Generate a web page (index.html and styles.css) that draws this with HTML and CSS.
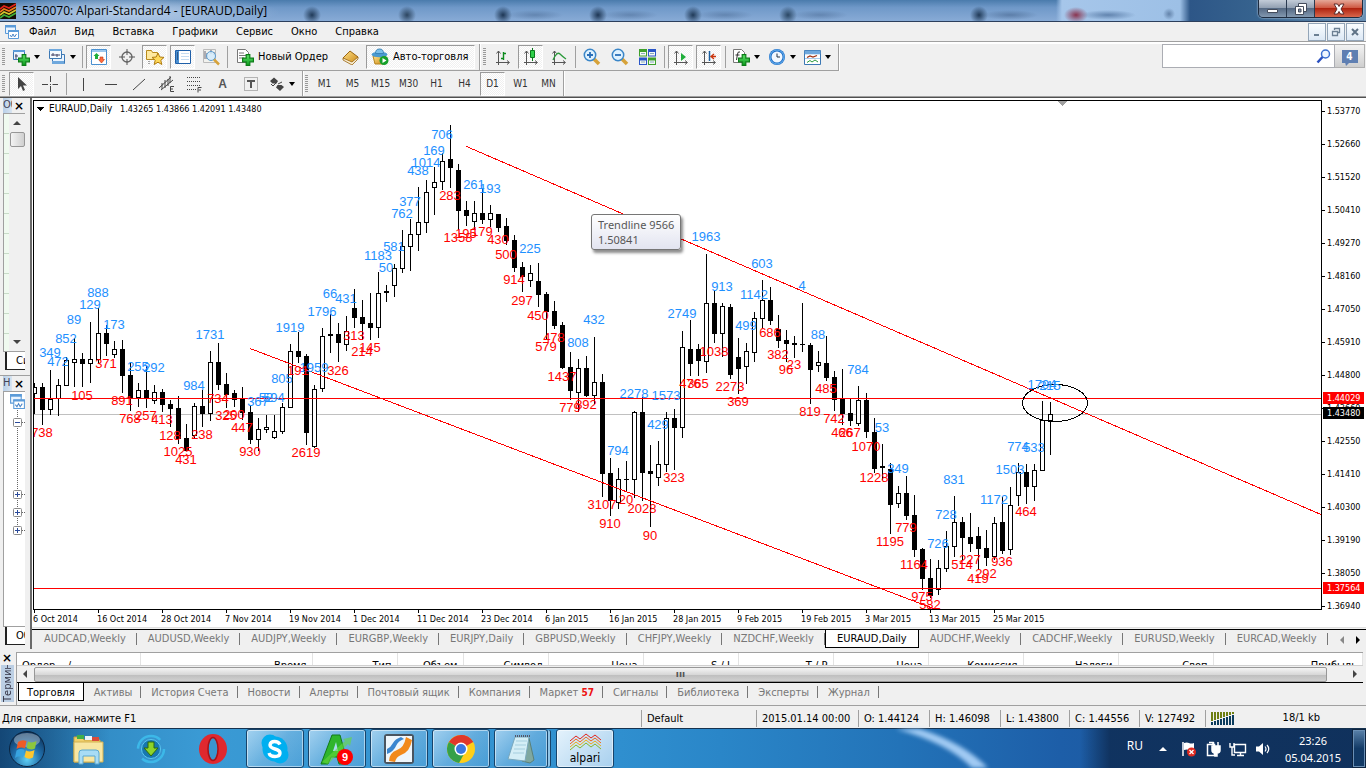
FILE: index.html
```html
<!DOCTYPE html>
<html lang="ru">
<head>
<meta charset="utf-8">
<title>5350070: Alpari-Standard4 - [EURAUD,Daily]</title>
<link rel="stylesheet" href="styles.css">
</head>
<body>
<svg class="defs" aria-hidden="true">
  <defs>
    <linearGradient id="gPlus" x1="0" y1="0" x2="0" y2="1"><stop offset="0" stop-color="#5fe36a"/><stop offset="1" stop-color="#0b9a1c"/></linearGradient>
    <linearGradient id="gGold" x1="0" y1="0" x2="1" y2="1"><stop offset="0" stop-color="#ffe28a"/><stop offset="1" stop-color="#c98512"/></linearGradient>
    <radialGradient id="gOrb" cx=".5" cy=".8" r=".8"><stop offset="0" stop-color="#5fd0f5"/><stop offset=".5" stop-color="#1f6ca8"/><stop offset="1" stop-color="#0d2f55"/></radialGradient>
    <symbol id="plus" viewBox="0 0 10 10"><path d="M3.500.5h3v3h3v3h-3v3h-3v-3h-3v-3h3z" fill="url(#gPlus)" stroke="#0a7d16"/></symbol>
    <symbol id="axes" viewBox="0 0 18 18"><path d="M4.500 3v14M2 14.500h13M2.500 5.500l2-2.500 2 2.500M13 12.500l2.500 2-2.500 2" fill="none" stroke="#555"/></symbol>
    <symbol id="charts" viewBox="0 0 16 16"><path d="M1.500 1.500h10v8h-10z" fill="#eaf4ff" stroke="#5b9bd8"/><path d="M1 1h11v2.500H1z" fill="#5b9bd8"/><path d="M4.500 6.500h10v8h-10z" fill="#fff" stroke="#5b9bd8"/><path d="M4 6h11v2H4z" fill="#5b9bd8"/><path d="M6 11l1.500 2 1.500-3 1.500 3 2-3" fill="none" stroke="#4a86c8"/></symbol>
  </defs>
</svg>

<header class="titlebar">
  <svg class="logo" viewBox="0 0 16 16"><rect width="16" height="16" fill="#150c05"/><g fill="none" stroke-width="1.600"><path d="M0 6l4-3 5 2 7-4" stroke="#e2231a"/><path d="M0 9l4-3 5 2 7-4" stroke="#f07a1a"/><path d="M0 12l4-3 5 2 7-4" stroke="#d5c52a"/><path d="M0 15l4-3 5 2 7-4" stroke="#3fae38"/></g></svg>
  <h1 class="title">5350070: Alpari-Standard4 - [EURAUD,Daily]</h1>
  <div class="winctl">
    <button class="wc" aria-label="Свернуть"><svg width="14" height="12"><path d="M1.500 6.500h10v3h-10z" fill="#fff" stroke="#444c5c"/></svg></button>
    <button class="wc" aria-label="Восстановить"><svg width="14" height="12"><path d="M4.500.5h8v8h-8z" fill="#fff" stroke="#444c5c"/><path d="M1.500 3.500h8v8h-8z" fill="#fff" stroke="#444c5c"/><path d="M4.500 6h2.500v3H4.500z" fill="#8292ab" stroke="#444c5c"/></svg></button>
    <button class="wc wc-close" aria-label="Закрыть"><svg width="14" height="12"><path d="M2 1h3.500L7 3.500 8.500 1H12L9 6l3 5H8.500L7 8.500 5.500 11H2l3-5z" fill="#fff" stroke="#5a2a2a"/></svg></button>
  </div>
</header>

<nav class="menubar">
  <svg class="mdi-icon" width="16" height="16"><use href="#charts"/></svg>
  <button>Файл</button><button>Вид</button><button>Вставка</button><button>Графики</button><button>Сервис</button><button>Окно</button><button>Справка</button>
  <div class="mdictl">
    <button aria-label="Свернуть окно"><svg width="10" height="10"><path d="M2 7h5v2H2z" fill="#6b7f93"/></svg></button>
    <button aria-label="Восстановить окно"><svg width="10" height="10"><path d="M3.500 3V1.500h5v4H7M1.500 4.500h5v4h-5z" fill="none" stroke="#6b7f93" stroke-width="1.300"/></svg></button>
    <button aria-label="Закрыть окно"><svg width="10" height="10"><path d="M2 2l6 6M8 2L2 8" stroke="#5f7387" stroke-width="2"/></svg></button>
  </div>
</nav>

<div class="tools">
  <div class="bars">
    <div class="bar">
      <div class="band">
        <i class="grip"></i>
        <button class="tb drop" aria-label="Новый график"><svg width="18" height="18"><path d="M1.500 2.500h11v9h-11z" fill="#eaf4ff" stroke="#3c78b4"/><path d="M1 2h12v2H1z" fill="#5b9bd8"/><path d="M4 6v5M3 8h3" stroke="#446"/><use href="#plus" x="6" y="6" width="12" height="12"/></svg></button>
        <button class="tb drop" aria-label="Профили"><svg width="18" height="18"><path d="M4.500 6.500h12v9h-12z" fill="#eaf4ff" stroke="#3c78b4"/><path d="M1.500 1.500h12v9h-12z" fill="#f4faff" stroke="#3c78b4"/><path d="M1 1h13v2H1zM4 13h12v3H4z" fill="#6fa8dd"/><path d="M3 7h9M5 5v3M9 6v3" stroke="#446"/></svg></button>
        <i class="sep"></i>
        <button class="tb on" aria-label="Обзор рынка"><svg width="16" height="16"><path d="M.5.500h15v15H.5z" fill="#fff" stroke="#4a90d0"/><path d="M1 1h14v2H1z" fill="#9cc8ee"/><path d="M5.500 4l3 3H7v3H4V7H2.500z" fill="#1fae3a"/><path d="M10.500 14l-3-3.500H9V8h3v2.500h1.500z" fill="#ff6a3c" stroke="#b83a18" stroke-width=".6"/></svg></button>
        <button class="tb" aria-label="Окно данных"><svg width="16" height="16"><circle cx="8" cy="8" r="5" fill="none" stroke="#666" stroke-width="1.300"/><path d="M8 0v6M8 10v6M0 8h6M10 8h6" stroke="#555"/></svg></button>
        <button class="tb on" aria-label="Навигатор"><svg width="20" height="18"><path d="M1.500 2.500h5l1 2h5v7h-11z" fill="#ffe9a0" stroke="#b98a1c"/><path d="M4 13v4" stroke="#555" stroke-dasharray="1 1"/><path d="M13 5l1.800 4 4.200.4-3.200 2.900 1 4.200-3.800-2.300-3.800 2.300 1-4.200L7 9.400l4.200-.4z" fill="#ffd95a" stroke="#b07c10"/></svg></button>
        <button class="tb on" aria-label="Терминал"><svg width="16" height="14"><path d="M.5.500h15v13H.5z" fill="#fff" stroke="#1f5fa8"/><path d="M1 1h3v12H1z" fill="#4a8fd0"/><path d="M2 3h1M2 5h1M2 7h1M2 9h1" stroke="#102040"/><path d="M6 3.500h8M6 6.500h8M6 9.500h8" stroke="#c5dcf2"/></svg></button>
        <button class="tb" aria-label="Тестер стратегий"><svg width="18" height="18"><path d="M1.500 1.500h12v13h-12z" fill="#f2f2ee" stroke="#bbb"/><path d="M3 3v8M5 5v6M9 2v4M12 4v3" stroke="#667"/><circle cx="9" cy="8" r="4.500" fill="#d5ecfb" fill-opacity=".85" stroke="#5c9cd0"/><path d="M12 11.500l5 5" stroke="#d6a23a" stroke-width="2.500"/></svg></button>
        <i class="sep"></i>
        <button class="tb txt"><svg width="18" height="18"><path d="M1.500 1.500h8l3 3v10h-11z" fill="#fff" stroke="#777"/><path d="M3 5h5M3 7.500h7M3 10h5" stroke="#777"/><use href="#plus" x="6" y="6" width="12" height="12"/></svg>Новый Ордер</button>
        <button class="tb" aria-label="MetaEditor"><svg width="18" height="16"><path d="M1 9l7-7 8 6-6 7z" fill="url(#gGold)" stroke="#9a6410"/><path d="M1 9v2l9 5 6-6V8l-6 5z" fill="#f7ecd0" stroke="#9a6410" stroke-width=".8"/></svg></button>
        <button class="tb txt on"><svg width="18" height="18"><path d="M2 8l2 8h8l3-8z" fill="url(#gGold)" stroke="#b5831c"/><ellipse cx="8.500" cy="6.500" rx="8" ry="2.800" fill="#4a9ad0"/><path d="M4.500 5.500q0-4.500 4-4.500t4 4.500z" fill="#7cc0ea" stroke="#3a84b8"/><circle cx="13" cy="12.500" r="4.500" fill="#16a02a"/><path d="M11.500 10v5l4-2.500z" fill="#fff"/></svg>Авто-торговля</button>
      </div>
      <div class="band">
        <i class="grip"></i>
        <button class="tb" aria-label="Бары"><svg width="18" height="18"><use href="#axes"/><path d="M9.500 4v8M7 10.500h2.500M9.500 5.500H12" stroke="#0a8a1c" stroke-width="1.400" fill="none"/></svg></button>
        <button class="tb on" aria-label="Свечи"><svg width="18" height="18"><use href="#axes"/><path d="M10.500 0v13" stroke="#0a7a1c"/><path d="M8.500 2.500h4v7h-4z" fill="#2fd04a" stroke="#0a7a1c"/></svg></button>
        <button class="tb" aria-label="Линия"><svg width="18" height="18"><use href="#axes"/><path d="M3 12q4-9 7-6t6 5" stroke="#2a9a3a" stroke-width="1.300" fill="none"/></svg></button>
        <i class="sep"></i>
        <button class="tb" aria-label="Увеличить"><svg width="18" height="18"><path d="M11 11l5 5" stroke="#d6a23a" stroke-width="3.500"/><circle cx="7" cy="7" r="5.700" fill="#dff2ff" stroke="#3a86c8" stroke-width="1.500"/><path d="M4 7h6M7 4v6" stroke="#2a6fb8" stroke-width="1.800"/></svg></button>
        <button class="tb" aria-label="Уменьшить"><svg width="18" height="18"><path d="M11 11l5 5" stroke="#d6a23a" stroke-width="3.500"/><circle cx="7" cy="7" r="5.700" fill="#dff2ff" stroke="#3a86c8" stroke-width="1.500"/><path d="M4 7h6" stroke="#2a6fb8" stroke-width="1.800"/></svg></button>
        <button class="tb" aria-label="Окна плиткой"><svg width="17" height="16"><path d="M0 0h8v7.500H0zM9 8.500h8V16H9z" fill="#3fa02c"/><path d="M9 0h8v7.500H9zM0 8.500h8V16H0z" fill="#2a56c8"/><path d="M1 3h6v3.500H1zM10 3h6v3.500h-6zM1 11.500h6V15H1zM10 11.500h6V15h-6z" fill="#f4f8f4"/><path d="M2 4.500h4M11 4.500h4M2 13h4M11 13h4" stroke="#8ab"/></svg></button>
        <i class="sep"></i>
        <button class="tb on" aria-label="Автопрокрутка"><svg width="18" height="18"><use href="#axes"/><path d="M9 5l5 4-5 4z" fill="#1fae3a"/></svg></button>
        <button class="tb on" aria-label="Сдвиг графика"><svg width="18" height="18"><use href="#axes"/><path d="M9.500 3v10" stroke="#1a5fa0" stroke-width="1.500"/><path d="M11 8.500h5M14 6l-3 2.500 3 2.500" stroke="#c8330c" stroke-width="1.300" fill="none"/></svg></button>
        <i class="sep"></i>
        <button class="tb drop" aria-label="Индикаторы"><svg width="18" height="18"><path d="M1.500 1.500h8l3 3v10h-11z" fill="#fff" stroke="#777"/><path d="M8 4Q6 3 5.500 6l-1 6M3.500 7h4" stroke="#333" fill="none"/><use href="#plus" x="6" y="6" width="12" height="12"/></svg></button>
        <button class="tb drop" aria-label="Периоды"><svg width="18" height="18"><circle cx="9" cy="9" r="8" fill="#1f6fc8"/><circle cx="9" cy="9" r="7" fill="none" stroke="#6ab4f0"/><circle cx="9" cy="9" r="5.500" fill="#f2f8ff"/><path d="M9 5.500V9h3" stroke="#234" fill="none"/></svg></button>
        <button class="tb drop" aria-label="Шаблоны"><svg width="17" height="15"><path d="M.5.500h16v14H.5z" fill="#fff" stroke="#3c78b4"/><path d="M1 1h15v3H1zM1 8.500h15" fill="#6fa8dd" stroke="#6fa8dd" stroke-width=".6"/><path d="M3 7.500l3-1.500 3 1 4-1.500" stroke="#a03010" fill="none" stroke-width="1.300"/><path d="M3 12.500l3-2 2 1.500 3-2 3 2" stroke="#2a9a3a" fill="none"/></svg></button>
      </div>
    </div>
    <div class="bar">
      <div class="band">
        <i class="grip"></i>
        <button class="tb on" aria-label="Курсор"><svg width="12" height="16"><path d="M2 1v12l3-3 2 5 2-1-2-4.500h4z" fill="#444"/></svg></button>
        <button class="tb" aria-label="Перекрестие"><svg width="16" height="16"><path d="M8.500 0v6M8.500 10v6M0 8.500h6M10.500 8.500h6M8 8.500h1" stroke="#444"/></svg></button>
        <i class="sep"></i>
        <button class="tb" aria-label="Вертикальная линия"><svg width="16" height="16"><path d="M8.500 2v13" stroke="#444"/></svg></button>
        <button class="tb" aria-label="Горизонтальная линия"><svg width="16" height="16"><path d="M2 8.500h12" stroke="#444"/></svg></button>
        <button class="tb" aria-label="Трендовая линия"><svg width="16" height="16"><path d="M2 14L14 3" stroke="#444"/></svg></button>
        <button class="tb" aria-label="Канал"><svg width="18" height="18"><path d="M1 13L13 2M3 15L15 5M4 8v6M7 5v8M10 4v7M12 1v7" stroke="#444" fill="none"/><path d="M16 11.500h-3.500v5H16M12.500 14H15" stroke="#444" fill="none"/></svg></button>
        <button class="tb" aria-label="Фибоначчи"><svg width="18" height="18"><path d="M1 2.500h14M1 6.500h14M1 10.500h14M1 14.500h9" stroke="#444" stroke-dasharray="1 1"/><path d="M15.500 12.500h-3.500v5M12.500 15H15" stroke="#444" fill="none"/></svg></button>
        <button class="tb letter" aria-label="Текст">A</button>
        <button class="tb" aria-label="Метка"><svg width="14" height="14"><path d="M.5.500h13v13H.5z" fill="none" stroke="#777" stroke-dasharray="1 1"/><path d="M3 4h8M7 4v7" stroke="#555" stroke-width="2"/></svg></button>
        <button class="tb drop" aria-label="Стрелки"><svg width="16" height="16"><path d="M1 5l4-3.500L9 5 7.500 7.500h-4zM15 11l-4 4-4-3.500 1.500-2.500h4z" fill="#444"/><path d="M2 8l2 2 3-3M9 8l4-2" stroke="#444" fill="none"/></svg></button>
      </div>
      <div class="band tf">
        <i class="grip"></i>
        <button class="tb">M1</button><button class="tb">M5</button><button class="tb">M15</button><button class="tb">M30</button><button class="tb">H1</button><button class="tb">H4</button><button class="tb on">D1</button><button class="tb">W1</button><button class="tb">MN</button>
      </div>
    </div>
  </div>
  <form class="search">
    <label class="field"><input type="search" aria-label="Поиск"><svg width="15" height="15"><circle cx="9.500" cy="5" r="4" fill="#eef6ff" stroke="#3a6fd0" stroke-width="1.500"/><path d="M6.500 8l-5 5.500" stroke="#2a50c0" stroke-width="2.500"/></svg></label>
    <button type="button" class="msgs" aria-label="Сообщения"><span>4</span></button>
  </form>
</div>

<main class="work">
  <aside class="side">
    <section class="pane">
      <div class="pane-head"><span>Об</span><button aria-label="Закрыть обзор рынка">×</button></div>
      <div class="pane-body">
        <div class="ticks"></div>
        <div class="vscroll"><i class="up"></i><i class="thumb"></i><i class="down"></i></div>
      </div>
      <button class="pane-tab">Символы</button>
    </section>
    <section class="pane pane-nav">
      <div class="pane-head"><span>Н</span><button aria-label="Закрыть навигатор">×</button></div>
      <div class="pane-body">
        <svg width="22" height="150">
          <path d="M13.500 16v133M18 30.500h4M18 102.500h4M18 120.500h4M18 138.500h4" stroke="#666" stroke-dasharray="1 1"/>
          <svg x="5" y="1" width="17" height="17" viewBox="0 0 16 16"><use href="#charts"/></svg>
          <path d="M8 140h12v10H8z" fill="#fff"/>
          <g fill="#fff" stroke="#8a8a8a"><rect x="9.500" y="26.500" width="8" height="8" rx="1"/><rect x="9.500" y="98.500" width="8" height="8" rx="1"/><rect x="9.500" y="116.500" width="8" height="8" rx="1"/><rect x="9.500" y="134.500" width="8" height="8" rx="1"/></g>
          <path d="M11 30.500h5M11 102.500h5M13.500 100v5M11 120.500h5M13.500 118v5M11 138.500h5M13.500 136v5" stroke="#2a4a9a"/>
        </svg>
      </div>
      <button class="pane-tab">Общие</button>
    </section>
  </aside>
  <section class="chartwin">
    <div class="plot">
      <svg id="chart" viewBox="32 98 1334 529" preserveAspectRatio="xMinYMin meet"></svg>
      <div class="tip">Trendline 9566<br>1.50841</div>
    </div>
    <nav class="ctabs">
      <button>AUDCAD,Weekly</button><button>AUDUSD,Weekly</button><button>AUDJPY,Weekly</button><button>EURGBP,Weekly</button><button>EURJPY,Daily</button><button>GBPUSD,Weekly</button><button>CHFJPY,Weekly</button><button>NZDCHF,Weekly</button><button class="cur">EURAUD,Daily</button><button>AUDCHF,Weekly</button><button>CADCHF,Weekly</button><button>EURUSD,Weekly</button><button>EURCAD,Weekly</button>
      <span class="arrows"><i class="al"></i><i class="ar"></i></span>
    </nav>
  </section>
</main>

<section class="terminal">
  <div class="tstrip"><button aria-label="Закрыть терминал">×</button><span>Терминал</span></div>
  <div class="tbody">
    <div class="thead">
      <table>
        <colgroup><col class="c1"><col class="c2"><col class="c3"><col class="c4"><col class="c5"><col class="c6"><col class="c6"><col class="c6"><col class="c6"><col class="c6"><col class="c6"><col class="c6"><col></colgroup>
        <thead><tr><th class="first">Ордер &nbsp; &nbsp;/</th><th>Время</th><th>Тип</th><th>Объем</th><th>Символ</th><th>Цена</th><th>S / L</th><th>T / P</th><th>Цена</th><th>Комиссия</th><th>Налоги</th><th>Своп</th><th>Прибыль</th></tr></thead>
      </table>
    </div>
    <div class="hscroll"><i class="left"></i><i class="hthumb">ııı</i><i class="right"></i></div>
    <nav class="ttabs">
      <button class="cur">Торговля</button><button>Активы</button><button>История Счета</button><button>Новости</button><button>Алерты</button><button>Почтовый ящик</button><button>Компания</button><button>Маркет <b>57</b></button><button>Сигналы</button><button>Библиотека</button><button>Эксперты</button><button>Журнал</button>
    </nav>
  </div>
</section>

<footer class="status">
  <span>Для справки, нажмите F1</span><span>Default</span><span>2015.01.14 00:00</span><span>O: 1.44124</span><span>H: 1.46098</span><span>L: 1.43800</span><span>C: 1.44556</span><span>V: 127492</span>
  <span class="net"><svg width="24" height="13"><g fill="#6e7f12"><path d="M0 0h2v9H0zM3 0h2v8H3zM6 0h2v7H6zM9 0h2v6H9zM12 0h2v5h-2zM15 0h2v4h-2zM18 0h2v3h-2zM21 0h2v2h-2z"/></g><g fill="#0c3c5c"><path d="M0 10h2v3H0zM3 9h2v4H3zM6 8h2v5H6zM9 7h2v6H9zM12 6h2v7h-2zM15 5h2v8h-2zM18 4h2v9h-2zM21 3h2v10h-2z"/></g></svg><span>18/1 kb</span></span>
</footer>

<footer class="taskbar">
  <svg class="streak" width="120" height="39"><path d="M0 0h24q44 14 68 39H76Q52 14 0 0z" fill="#b8dcff" opacity=".85"/></svg>
  <button class="start" aria-label="Пуск"><svg width="38" height="38"><circle cx="19" cy="19" r="17.500" fill="url(#gOrb)" stroke="#0b2440"/><ellipse cx="19" cy="10" rx="13" ry="7" fill="#fff" opacity=".35"/><path d="M10 12q4-3 8.500-1l-1.500 7.500q-4-2-8.500.5z" fill="#ef5b25"/><path d="M20 11.500q4 2 8.500-.5l-1.500 7.500q-4 2-8.500-.5z" fill="#8cc63e"/><path d="M8.500 20.500q4-2.500 8-.5l-1.500 7.500q-4-2-8 .5z" fill="#38a4e0"/><path d="M18 20.500q4 2 8.500-.5L25 27.500q-4 2.500-8.500-.5z" fill="#fdc62e"/></svg></button>
  <button class="app" aria-label="Проводник"><svg width="34" height="32"><path d="M2 4h8l2 3h16v22H2z" fill="#f0cf6a" stroke="#c9a23c"/><path d="M5 2h7v4H5z" fill="#3fae4a"/><path d="M13 3h7v4h-7z" fill="#e8f2fa"/><path d="M20 4h7v4h-7z" fill="#d94b3a"/><path d="M2 9h29v20H2z" fill="#f8e6a2" stroke="#d2b050"/><path d="M7 31V20q0-3 3-3h14q3 0 3 3v11h-4v-8H11v8z" fill="#a8dcf5" stroke="#5aa8d0"/></svg></button>
  <button class="app" aria-label="Загрузчик"><svg width="32" height="32"><circle cx="16" cy="16" r="13" fill="none" stroke="#3cb8e8" stroke-width="2.500" stroke-dasharray="30 11"/><circle cx="16" cy="16" r="9.500" fill="#1877b0" stroke="#5cc8f0"/><path d="M13 9h6v6h4l-7 8-7-8h4z" fill="#8ed32a" stroke="#2a6a10"/></svg></button>
  <button class="app" aria-label="Opera"><svg width="32" height="32"><ellipse cx="16" cy="16" rx="14" ry="15" fill="#e0282e"/><ellipse cx="16" cy="16" rx="5" ry="11.500" fill="#3a95cf" stroke="#a81218" stroke-width="1.500"/></svg></button>
  <button class="app open" aria-label="Skype"><svg width="32" height="32"><circle cx="11" cy="10" r="8.500" fill="#00aff0"/><circle cx="21" cy="22" r="8.500" fill="#00aff0"/><circle cx="16" cy="16" r="12.500" fill="#00aff0"/><path d="M21 11.500q-1.500-3-5.500-3T11 12q0 2.500 5 4t5 4q0 3.500-5 3.500t-6-3.500" fill="none" stroke="#fff" stroke-width="3.400"/></svg></button>
  <button class="app open" aria-label="Менеджер"><svg width="36" height="34"><path d="M2 32L13 3h8l8 29h-9l-2-7h-6l-3 7z" fill="#2fb52c" stroke="#137a18"/><path d="M14 19l3-9 2 9z" fill="#a8dcf0"/><path d="M3 30L26 9l-2-2 9-2-2 9-2-2L9 32z" fill="#66d83c" opacity=".6"/><circle cx="26" cy="25" r="8" fill="#f00"/><text x="26" y="29" text-anchor="middle" class="badge">9</text></svg></button>
  <button class="app open" aria-label="PDF"><svg width="32" height="32"><rect x="1" y="1" width="30" height="30" rx="3" fill="#4a5560"/><rect x="3" y="3" width="26" height="26" fill="#eef6fc"/><path d="M6 28q0-8 8-11 7-2 9-13l6 3q-2 12-11 15-5 2-6 7z" fill="#f28a1c"/><path d="M4 16q4-2 6-6t8-6l3 2q-6 2-8 7t-9 8z" fill="#3a86d0"/></svg></button>
  <button class="app open" aria-label="Chrome"><svg width="32" height="32"><circle cx="16" cy="16" r="14" fill="#ffcf1a"/><path d="M16 16L3.900 9A14 14 0 0 1 28.100 9z" fill="#e0382a"/><path d="M16 16L3.900 9A14 14 0 0 0 14 29.900l5-9z" fill="#35a04a"/><path d="M16 2A14 14 0 0 1 28.100 9H16z" fill="#e0382a"/><circle cx="16" cy="16" r="6.500" fill="#fff"/><circle cx="16" cy="16" r="5" fill="#3a78e0"/></svg></button>
  <button class="app open multi" aria-label="Блокнот"><svg width="32" height="32"><path d="M20 4l4 1 5 22-4 3-8-2z" fill="#7fa8a0" stroke="#5a8078"/><path d="M3 26L10 4h14l-4 24z" fill="#d4eef6" stroke="#7aa8bc"/><path d="M11 8h11M10 12h11M9 16h11M8 20h11" stroke="#a4cede"/><path d="M10 3h15" stroke="#556" stroke-width="2" stroke-dasharray="1 1"/></svg></button>
  <button class="app open active" aria-label="alpari"><svg width="34" height="20"><g fill="none"><path d="M2 9l6-5 4 3 6-5 5 4 4-3 6 5" stroke="#e2231a"/><path d="M2 12l6-5 4 3 6-5 5 4 4-3 6 5" stroke="#f0661a"/><path d="M2 15l6-5 4 3 6-5 5 4 4-3 6 5" stroke="#eda81a"/><path d="M2 18l6-5 4 3 6-5 5 4 4-3 6 5" stroke="#8ab52a"/></g></svg><span>alpari</span></button>
  <div class="tray">
    <span class="lang">RU</span>
    <i class="more"></i>
    <svg width="16" height="16"><path d="M2 1v14" stroke="#fff" stroke-width="1.500"/><path d="M3 2q3-1 5 0t5 0v7q-3 1-5 0t-5 0z" fill="#fff"/><circle cx="10.500" cy="11" r="4.500" fill="#e02a20"/><path d="M8.500 9l4 4M12.500 9l-4 4" stroke="#fff" stroke-width="1.300"/></svg>
    <svg width="16" height="16"><path d="M2.500 3.500h7v11h-7zM4 1.500h4V3" fill="none" stroke="#fff" stroke-width="1.500"/><path d="M7 5h8v4q0 3-3 3v3h-2v-3q-3 0-3-3zM8.500 1v4M13 1v4" fill="#fff" stroke="#fff" stroke-width="1.500"/></svg>
    <svg width="18" height="16"><path d="M5.500 3.500h11v8h-11zM8 14.500h7M11.500 12v2" fill="none" stroke="#fff" stroke-width="1.400"/><path d="M1 2v4h4V2M3 6v8h3" fill="none" stroke="#fff" stroke-width="1.400"/></svg>
    <svg width="16" height="16"><path d="M1 5.500h3L8 2v12L4 10.500H1z" fill="#fff"/><path d="M10 5.500q2 2.500 0 5M12 4q3.500 4 0 8" fill="none" stroke="#fff" stroke-width="1.200"/></svg>
    <time class="clock">23:26<br>05.04.2015</time>
    <button class="desk" aria-label="Свернуть все окна"></button>
  </div>
</footer>
<script src="chart.js"></script>
</body>
</html>
```

FILE: styles.css
```css
* { box-sizing: border-box; }
body {
  margin: 0;
  min-height: 100vh;
  display: flex;
  flex-direction: column;
  background: #f0f0f0;
  color: #000;
  font: 11px/14px "DejaVu Sans Condensed", "DejaVu Sans", Tahoma, sans-serif;
  overflow-x: hidden;
}
button { margin: 0; padding: 0; border: 0; background: none; color: inherit; font: inherit; white-space: nowrap; }
svg { display: block; flex: none; }
.defs { position: absolute; width: 0; height: 0; }

/* title bar */
.titlebar {
  display: flex;
  align-items: center;
  height: 22px;
  border-bottom: 1px solid #2c3f5c;
  background:
    radial-gradient(ellipse 150px 18px at 130px 12px, rgba(200, 218, 238, .8), rgba(200, 218, 238, 0)),
    radial-gradient(circle 9px at 312px 15px, #203a58, transparent),
    radial-gradient(circle 9px at 407px 15px, #2c4560, transparent),
    radial-gradient(circle 9px at 503px 15px, #1d3654, transparent),
    radial-gradient(circle 9px at 598px 15px, #1d3654, transparent),
    radial-gradient(circle 9px at 693px 15px, #203a58, transparent),
    radial-gradient(circle 9px at 788px 15px, #2a4764, transparent),
    radial-gradient(circle 9px at 979px 15px, #203a58, transparent),
    radial-gradient(ellipse 12px 8px at 1076px 15px, #8a3550, transparent),
    radial-gradient(ellipse 28px 5px at 1108px 15px, rgba(70, 105, 150, .7), transparent),
    radial-gradient(ellipse 6px 6px at 1169px 14px, rgba(60, 90, 130, .6), transparent),
    radial-gradient(ellipse 28px 5px at 1010px 15px, rgba(60, 90, 130, .5), transparent),
    radial-gradient(ellipse 28px 5px at 535px 15px, rgba(60, 90, 130, .4), transparent),
    radial-gradient(ellipse 28px 5px at 630px 15px, rgba(60, 90, 130, .4), transparent),
    radial-gradient(ellipse 28px 5px at 725px 15px, rgba(60, 90, 130, .4), transparent),
    radial-gradient(ellipse 28px 5px at 820px 15px, rgba(60, 90, 130, .4), transparent),
    linear-gradient(90deg, transparent 1056px, #a6c6ea 1062px, #9dc0e6 1180px, #2d5687 1190px, #37648f 1260px, #6a90b4 100%),
    linear-gradient(#4a7bac, #6f98c8 35%, #88abd6);
}
.logo { width: 16px; height: 16px; }
.title { margin: 0 0 0 6px; font: 12px/20px "Open Sans", "Noto Sans", sans-serif; }
.winctl {
  display: flex;
  align-self: flex-start;
  height: 18px;
  margin: 0 3px 0 auto;
  border: 1px solid #1e2c40;
  border-top: 0;
  border-radius: 0 0 5px 5px;
  overflow: hidden;
  box-shadow: 0 0 2px #dfeaf6;
}
.wc { display: flex; align-items: center; justify-content: center; width: 28px; border-right: 1px solid #2a3a50; background: linear-gradient(#c3ccd8, #93a1b3 45%, #566a84 50%, #8398b0); }
.wc-close { width: 47px; border-right: 0; background: linear-gradient(#e5a898, #cf5a44 45%, #b02410 50%, #d8674c); }

/* menu */
.menubar { display: flex; align-items: center; gap: 18px; height: 22px; border-bottom: 2px solid #fff; box-shadow: inset 0 -1px #a0a0a0; padding: 0 2px 1px 4px; }
.mdi-icon { margin-right: -9px; }
.mdictl { display: flex; gap: 1px; margin-left: auto; }
.mdictl button { display: flex; align-items: center; justify-content: center; width: 18px; height: 18px; border: 1px solid #93a5b8; background: linear-gradient(#fafdff, #dce8f5); }

/* toolbars */
.tools { display: flex; justify-content: space-between; border-bottom: 1px solid #a0a0a0; box-shadow: 0 1px #505050; margin-bottom: 1px; }
.bar { display: flex; height: 27px; }
.bar + .bar { height: 25px; }
.band { display: flex; align-items: center; padding-right: 2px; border-right: 1px solid #a0a0a0; border-bottom: 1px solid #a0a0a0; box-shadow: 1px 0 #fff; }
.bar + .bar .band { padding-right: 1px; border-bottom: 0; }
.band + .band { padding-left: 1px; }
.bar .band.tf { padding: 0; }
.grip { width: 3px; height: 18px; margin: 0 3px 0 2px; background: repeating-linear-gradient(#999 0 1px, transparent 1px 2px); }
.sep { width: 1px; height: 22px; margin: 0 2px; background: #a0a0a0; }
.tb { display: flex; align-items: center; justify-content: center; width: 25px; height: 24px; margin: 0 2px 0 1px; border: 1px solid transparent; color: #333; }
.tb.on { border-color: #9a9a9a #fff #fff #9a9a9a; background: repeating-conic-gradient(#fff 0 25%, #f0f0f0 0 50%) 0 0 / 2px 2px; }
.tb.drop { width: 35px; margin: 0 0 0 1px; justify-content: flex-start; gap: 4px; padding-left: 2px; }
.tb.drop::after { content: ""; border: 3px solid transparent; border-top: 4px solid #000; border-bottom: 0; }
.tb.txt { width: auto; gap: 4px; padding: 0 6px 0 4px; color: #000; }
.tb.letter { font: bold 12px "Liberation Sans", sans-serif; color: #555; }
.tf .tb { font-size: 10px; }
.search { display: flex; align-self: flex-start; width: 203px; height: 24px; margin-right: 1px; }
.field { flex: 1; min-width: 0; display: flex; align-items: center; padding-right: 3px; background: #fff; border: 1px solid #abadb3; }
.field input { flex: 1; width: 0; min-width: 0; border: 0; outline: 0; background: none; }
.msgs { flex: none; width: 30px; border: 1px solid #b0b0b0; border-left: 0; background: linear-gradient(#f2f2f2, #cfcfcf); display: flex; align-items: center; justify-content: center; }
.msgs span { width: 16px; height: 13px; background: #5f7fb2; color: #fff; font: bold 10px/13px "DejaVu Sans Condensed", sans-serif; position: relative; }
.msgs span::after { content: ""; position: absolute; left: 3px; top: 12px; border: 4px solid transparent; border-top-color: #5f7fb2; border-left-width: 1px; }

/* workspace */
.work { flex: 1; display: flex; min-height: 0; }
.side { width: 30px; display: flex; flex-direction: column; }
.pane { display: flex; flex-direction: column; height: 278px; padding: 0 5px 5px 3px; border-bottom: 1px solid #a0a0a0; }
.pane-nav { flex: 1; height: auto; border: 0; padding-bottom: 4px; }
.pane-head { display: flex; justify-content: space-between; height: 15px; }
.pane-head span { width: 9px; overflow: hidden; color: #445; font-size: 11px; background: linear-gradient(90deg, #b8cfe8, #d8e4f0); }
.pane-head button { font: bold 12px/14px "DejaVu Sans", sans-serif; width: 12px; }
.pane-body { flex: 1; display: flex; border: 1px solid #a0a0a0; border-right: 0; background: #fff; overflow: hidden; }
.ticks { width: 5px; background: repeating-linear-gradient(#f0faf0 0 19px, #c8dcc8 19px 20px); }
.vscroll { flex: 1; display: flex; flex-direction: column; align-items: center; background: #f0f0f0; padding: 7px 0; }
.vscroll .thumb { width: 15px; height: 15px; margin-top: 7px; border: 1px solid #979797; border-radius: 2px; background: linear-gradient(90deg, #f4f4f4, #cfcfcf); }
.up, .down { border: 4px solid transparent; }
.vscroll .up { border-top: 0; border-bottom-color: #444; }
.vscroll .down { border-bottom: 0; border-top-color: #444; margin-top: auto; }
.pane-tab { height: 18px; margin: 0 0 0 2px; padding-left: 9px; overflow: hidden; text-align: left; background: #fff; border-left: 2px solid #222; border-bottom: 1px solid #222; }
.chartwin { flex: 1; min-width: 0; display: flex; flex-direction: column; border-left: 2px solid #6a6a6a; }
.plot { position: relative; flex: 1; background: #fff; border-bottom: 1px solid #e0e0e0; }
#chart { width: 100%; height: auto; font: 9px "DejaVu Sans Condensed", "DejaVu Sans", sans-serif; }
#chart .tag { font: 13px "Liberation Sans", Arial, sans-serif; text-anchor: middle; }
#chart .up { fill: #1e90ff; }
#chart .dn { fill: #f00; }
#chart .sym { font-size: 10px; }
.tip {
  position: absolute;
  left: 559px;
  top: 116px;
  padding: 2px 6px;
  border: 1px solid #767676;
  border-radius: 3px;
  background: linear-gradient(#fff, #e2e4f0);
  box-shadow: 2px 3px 3px rgba(0, 0, 0, .45);
  color: #575757;
  font: 11px/15px "Noto Sans", "Open Sans", sans-serif;
}
.ctabs { display: flex; height: 20px; border-top: 1px solid #000; margin-top: 1px; color: #777; padding-left: 1px; }
.ctabs button { height: 18px; padding: 0 11px; position: relative; }
.ctabs button::after, .ttabs button::after { content: ""; position: absolute; right: 0; top: 3px; height: 12px; border-right: 1px solid #777; }
.ctabs .cur, .ttabs .cur { background: #fff; color: #000; border: 1px solid #000; border-top: 0; }
.ctabs .cur::after, .ttabs .cur::after { border: 0; }
.arrows { display: flex; align-items: center; gap: 12px; margin: 0 6px 0 auto; }
.al, .ar { border: 4px solid transparent; }
.al { border-left: 0; border-right-color: #888; }
.ar { border-right: 0; border-left-color: #000; }

/* terminal */
.terminal { display: flex; height: 54px; margin-top: 3px; border-bottom: 1px solid #a0a0a0; }
.tstrip { width: 16px; display: flex; flex-direction: column; }
.tstrip button { height: 13px; width: 14px; font: bold 12px/13px "DejaVu Sans", sans-serif; }
.tstrip span { width: 13px; height: 37px; margin-left: 1px; overflow: hidden; writing-mode: vertical-rl; transform: rotate(180deg); background: #bccfe4; color: #334; font-size: 11px; line-height: 13px; }
.tbody { flex: 1; min-width: 0; margin-right: 3px; border-top: 1px solid #a0a0a0; border-left: 1px solid #a0a0a0; }
.thead { height: 12px; overflow: hidden; background: #fff; }
table { width: 100%; table-layout: fixed; border-collapse: collapse; }
th { padding: 6px 5px 2px; text-align: right; font-weight: normal; border-right: 1px solid #e3e3e3; white-space: nowrap; }
th.first { text-align: left; }
.c1 { width: 123px; } .c2 { width: 172px; } .c3 { width: 85px; } .c4 { width: 66px; } .c5 { width: 85px; } .c6 { width: 95px; }
.hscroll { display: flex; align-items: center; justify-content: space-between; height: 17px; padding: 0 6px; background: #f0f0f0; border-top: 1px solid #d0d0d0; }
.hthumb { flex: 1; height: 15px; margin: 0 26px 0 7px; border: 1px solid #979797; border-radius: 2px; background: linear-gradient(#f4f4f4, #d8d8d8 50%, #bdbdbd 51%, #d0d0d0); text-align: center; font: bold 9px/12px "DejaVu Sans", sans-serif; color: #555; }
.left, .right { border: 4px solid transparent; }
.left { border-left: 0; border-right-color: #444; }
.right { border-right: 0; border-left-color: #444; }
.ttabs { display: flex; border-top: 1px solid #000; padding-left: 1px; color: #777; }
.ttabs button { height: 18px; padding: 2px 9px 0 10px; position: relative; }
.ttabs .cur { padding: 2px 8px 0; }
.ttabs b { color: #e11; font-size: 10px; }

/* status */
.status { display: grid; grid-template-columns: 1fr 115px 102px 71px 71px 69px 70px 66px 161px; height: 22px; align-items: center; padding-top: 2px; }
.status > span { height: 17px; padding-left: 5px; line-height: 18px; border-left: 1px solid #a0a0a0; white-space: nowrap; }
.status > span:first-child { border: 0; padding-left: 2px; }
.status .net { display: flex; align-items: center; padding-right: 46px; justify-content: space-between; }

/* taskbar */
.taskbar {
  position: relative;
  display: flex;
  align-items: center;
  height: 40px;
  border-top: 1px solid #16324f;
  background:
    linear-gradient(90deg, rgba(12, 52, 96, .75), transparent 110px, transparent 1080px, rgba(14, 44, 84, .85) 1110px),
    linear-gradient(90deg, #2b7fb8, #3a9ad4 200px, #2f8fcf 620px, #2a86c8 720px, #2373b8 900px, #1d5ea8 1060px, #1a4f8c);
}
.taskbar button { position: relative; }
.streak { position: absolute; left: 896px; top: 0; filter: blur(2px); }
.start { margin: 0 14px 0 8px; }
.app { display: flex; align-items: center; justify-content: center; width: 58px; height: 39px; margin-right: 4px; }
.open { border: 1px solid #17446b; border-radius: 3px; box-shadow: inset 0 0 0 1px rgba(255, 255, 255, .5); background: linear-gradient(135deg, rgba(220, 240, 255, .65), rgba(170, 210, 240, .4) 50%, rgba(120, 180, 225, .3)); }
.multi { width: 54px; margin-right: 8px; box-shadow: inset 0 0 0 1px rgba(255, 255, 255, .5), 3px 0 0 -1px #8fc4e6, 4px 0 0 -1px #17446b; }
.active { flex-direction: column; background: linear-gradient(135deg, #e4f2fc, #a8d0ee); }
.active span { font-size: 12px; line-height: 13px; }
.badge { font: bold 11px "Liberation Sans", sans-serif; fill: #fff; }
.tray { position: relative; display: flex; align-items: center; gap: 8px; height: 100%; margin-left: auto; color: #fff; font: 12px/17px "Noto Sans", "Open Sans", sans-serif; }
.lang { margin: 0 8px 6px 0; }
.more { border: 4px solid transparent; border-top: 0; border-bottom-color: #fff; margin-right: 6px; }
.clock { width: 62px; margin: 0 0 0 3px; text-align: center; white-space: nowrap; font-size: 11px; }
.desk { width: 14px; height: 39px; border: 1px solid #0d2440; box-shadow: inset 0 0 0 1px #6a8fb4; background: linear-gradient(#5a82aa, #123a66 50%); }
```

FILE: chart.js
```js
// Candles run every 8px from x = 34: [high, body top, body bottom, low, rising]
const candles = [
  [383,387,394,414,1],[383,387,410,425,0],[370,399,410,415,1],[379,385,399,416,1],[357,360,386,386,1],
  [338,359,363,387,1],[353,359,364,387,0],[322,359,364,383,1],[308,333,360,363,1],[325,333,344,356,0],
  [341,349,355,358,1],[340,349,376,393,0],[362,375,398,411,0],[383,390,398,407,1],[366,390,398,408,0],
  [385,392,401,404,1],[389,392,405,412,0],[400,404,409,427,0],[396,408,439,444,0],[424,438,451,451,0],
  [403,406,436,438,1],[390,406,414,427,0],[351,362,414,421,1],[343,362,385,390,0],[373,384,395,408,0],
  [390,393,400,407,0],[387,399,413,420,0],[406,412,440,444,0],[418,429,440,451,1],[415,427,430,433,1],
  [415,431,438,439,1],[403,407,432,434,1],[344,351,408,408,1],[332,351,357,363,0],[354,356,433,445,0],
  [385,389,447,448,1],[328,336,389,392,1],[314,334,336,353,1],[323,334,343,362,0],[316,331,345,351,1],
  [289,308,318,328,0],[300,317,324,340,0],[293,323,328,340,0],[272,293,328,338,1],[285,291,293,302,1],
  [264,268,286,297,1],[230,246,269,273,1],[219,234,247,271,1],[187,222,235,251,1],[180,192,223,233,1],
  [167,182,188,215,1],[153,161,182,190,1],[125,159,168,188,0],[164,170,211,230,0],[201,210,216,226,0],
  [201,213,222,229,1],[188,213,220,224,0],[205,213,220,227,1],[214,214,228,232,0],[218,226,241,245,0],
  [235,240,268,272,0],[262,267,277,292,0],[265,273,281,287,1],[263,281,295,307,0],[292,294,312,340,0],
  [301,311,326,329,0],[322,325,368,369,0],[352,367,391,400,0],[359,368,393,412,1],[356,368,396,397,0],
  [337,382,396,404,1],[374,382,474,497,0],[458,473,501,516,0],[468,479,503,509,1],[461,479,480,491,0],
  [411,412,480,498,1],[397,412,473,501,0],[445,471,474,527,0],[441,464,478,486,1],[412,418,465,472,1],
  [409,418,428,470,0],[331,347,428,438,1],[320,349,364,376,0],[344,349,361,376,0],[254,303,362,373,1],
  [290,303,334,343,0],[303,306,334,357,1],[304,307,375,379,0],[338,357,369,394,0],[343,351,367,384,1],
  [312,318,353,362,1],[280,300,319,328,1],[287,300,321,325,0],[315,329,341,348,0],[330,340,344,362,0],
  [336,343,345,358,0],[303,344,345,352,0],[343,345,370,404,0],[351,362,366,372,1],[336,363,378,381,0],
  [371,377,400,411,0],[369,398,414,425,0],[399,413,421,426,0],[386,400,424,426,1],[393,400,432,438,0],
  [418,432,469,473,0],[444,466,468,480,1],[463,469,505,534,0],[486,493,504,508,1],[476,493,516,520,0],
  [495,515,550,557,0],[548,549,579,590,0],[559,578,596,598,0],[560,568,590,595,1],[531,546,569,572,1],
  [496,522,547,557,1],[517,522,538,560,0],[513,537,544,552,0],[527,536,549,570,0],[530,548,558,566,0],
  [517,523,557,560,1],[497,522,551,554,0],[487,505,550,555,1],[463,472,496,506,1],[464,472,487,504,0],
  [464,470,487,501,1],[401,420,471,471,1],[402,414,421,455,1]
];

// Volume tags: [text, centre x, baseline y]
const highs = [
  ["349",50,357],["472",58,366],["852",66,343],["89",74,324],["129",90,309],["888",98,297],["173",114,329],
  ["255",138,371],["292",154,372],["984",194,390],["1731",210,339],["367",258,406],["52",266,402],["594",274,402],
  ["805",282,383],["1919",290,332],["1959",314,372],["1796",322,316],["66",330,298],["431",346,303],["1183",378,260],
  ["50",386,272],["581",394,251],["762",402,218],["377",410,206],["438",418,175],["1014",426,167],["169",434,155],
  ["706",442,139],["261",474,189],["193",490,193],["225",530,253],["808",578,347],["432",594,324],["794",618,455],
  ["2278",634,398],["429",658,429],["1573",666,400],["2749",682,318],["1963",706,241],["913",722,291],["499",746,330],
  ["1142",754,299],["603",762,268],["4",802,290],["88",818,339],["784",858,374],["53",882,432],["349",898,473],
  ["726",938,548],["728",946,519],["831",954,484],["1172",994,504],["1503",1010,474],["774",1018,451],["533",1034,452],
  ["1794",1042,389],["215",1050,390]
];
const lows = [
  ["738",42,437],["105",82,400],["371",106,368],["891",122,405],["768",130,423],["257",146,420],["413",162,424],
  ["128",170,440],["1025",178,456],["431",186,464],["238",202,439],["734",218,403],["325",226,420],["200",234,419],
  ["447",242,432],["930",250,456],["191",298,375],["2619",306,457],["326",338,375],["313",354,340],["214",362,356],
  ["145",370,352],["283",450,200],["1358",458,242],["195",466,238],["179",482,236],["430",498,244],["500",506,259],
  ["914",514,284],["297",522,305],["450",538,320],["579",546,351],["478",554,342],["1437",562,381],["779",570,412],
  ["892",586,409],["3107",602,509],["910",610,528],["20",626,504],["2028",642,513],["90",650,540],["323",674,482],
  ["476",690,388],["365",698,388],["1038",714,356],["2273",730,391],["369",738,406],["686",770,337],["382",778,359],
  ["96",786,374],["23",794,369],["819",810,416],["485",826,393],["742",834,423],["466",842,437],["267",850,437],
  ["1070",866,451],["1228",874,482],["1195",890,546],["779",906,532],["1164",914,569],["975",922,601],["582",930,609],
  ["514",962,569],["227",970,564],["419",978,583],["292",986,578],["936",1002,566],["464",1026,516]
];
const dates = ["6 Oct 2014","16 Oct 2014","28 Oct 2014","7 Nov 2014","19 Nov 2014","1 Dec 2014","11 Dec 2014","23 Dec 2014",
  "6 Jan 2015","16 Jan 2015","28 Jan 2015","9 Feb 2015","19 Feb 2015","3 Mar 2015","13 Mar 2015","25 Mar 2015"];
const prices = ["1.53770","1.52660","1.51520","1.50410","1.49270","1.48160","1.47050","1.45910","1.44800","1.43660",
  "1.42550","1.41410","1.40300","1.39190","1.38050","1.36940"];

const box = (x, y, w, h, fill) => `<rect x="${x}" y="${y}" width="${w}" height="${h}" fill="${fill}"/>`;
const text = (s, x, y, cls = "", fill = "") =>
  `<text x="${x}" y="${y}"${cls ? ` class="${cls}"` : ""}${fill ? ` fill="${fill}"` : ""}>${s}</text>`;

let out = `<clipPath id="pane"><rect x="34" y="101" width="1287" height="508"/></clipPath>`;
out += `<g clip-path="url(#pane)"><g shape-rendering="crispEdges">` + box(34, 414, 1287, 1, "#c0c0c0");
candles.forEach(([h, t, b, l, rising], i) => {
  const x = 34 + i * 8;
  out += box(x, h, 1, Math.max(l - h, 1), "#000") + box(x - 2, t, 5, Math.max(b - t, 1), "#000");
  if (rising && b - t > 2) out += box(x - 1, t + 1, 3, b - t - 2, "#fff");
});
out += box(34, 398, 1287, 1, "#f00") + box(34, 588, 1287, 1, "#f00");
out += `<path d="M466.500 146.500L1321 514.500M250 348.500L936 609.500" stroke="#f00" fill="none"/>`;
out += `<ellipse cx="1055" cy="403" rx="32.500" ry="18.500" fill="none" stroke="#000"/></g>`;
highs.forEach(([s, x, y]) => { out += text(s, x, y, "tag up"); });
lows.forEach(([s, x, y]) => { out += text(s, x, y, "tag dn"); });
out += `</g><g shape-rendering="crispEdges"><path d="M33.500 100.500H1321.500V609.500H33.500z" fill="none" stroke="#000"/>`;
dates.forEach((d, i) => { out += box(34 + i * 64, 610, 1, 3, "#000"); });
prices.forEach((p, i) => { out += box(1322, 111 + i * 33, 3, 1, "#000"); });
out += `<path d="M37 107h7l-3.500 4z"/><path d="M1057 101h11l-5.500 5z" fill="#a0a0a0"/></g>`;
out += text("EURAUD,Daily", 49, 112, "sym") + text("1.43265 1.43866 1.42091 1.43480", 120, 112);
dates.forEach((d, i) => { out += text(d, 33 + i * 64, 622); });
prices.forEach((p, i) => { out += text(p, 1327, 114 + i * 33); });
[[398, "1.44029", "#f00"], [413, "1.43480", "#000"], [588, "1.37564", "#f00"]].forEach(([y, s, c]) => {
  out += box(1323, y - 6, 41, 12, c) + text(s, 1327, y + 3, "", "#fff");
});
document.getElementById("chart").innerHTML = out;
```
